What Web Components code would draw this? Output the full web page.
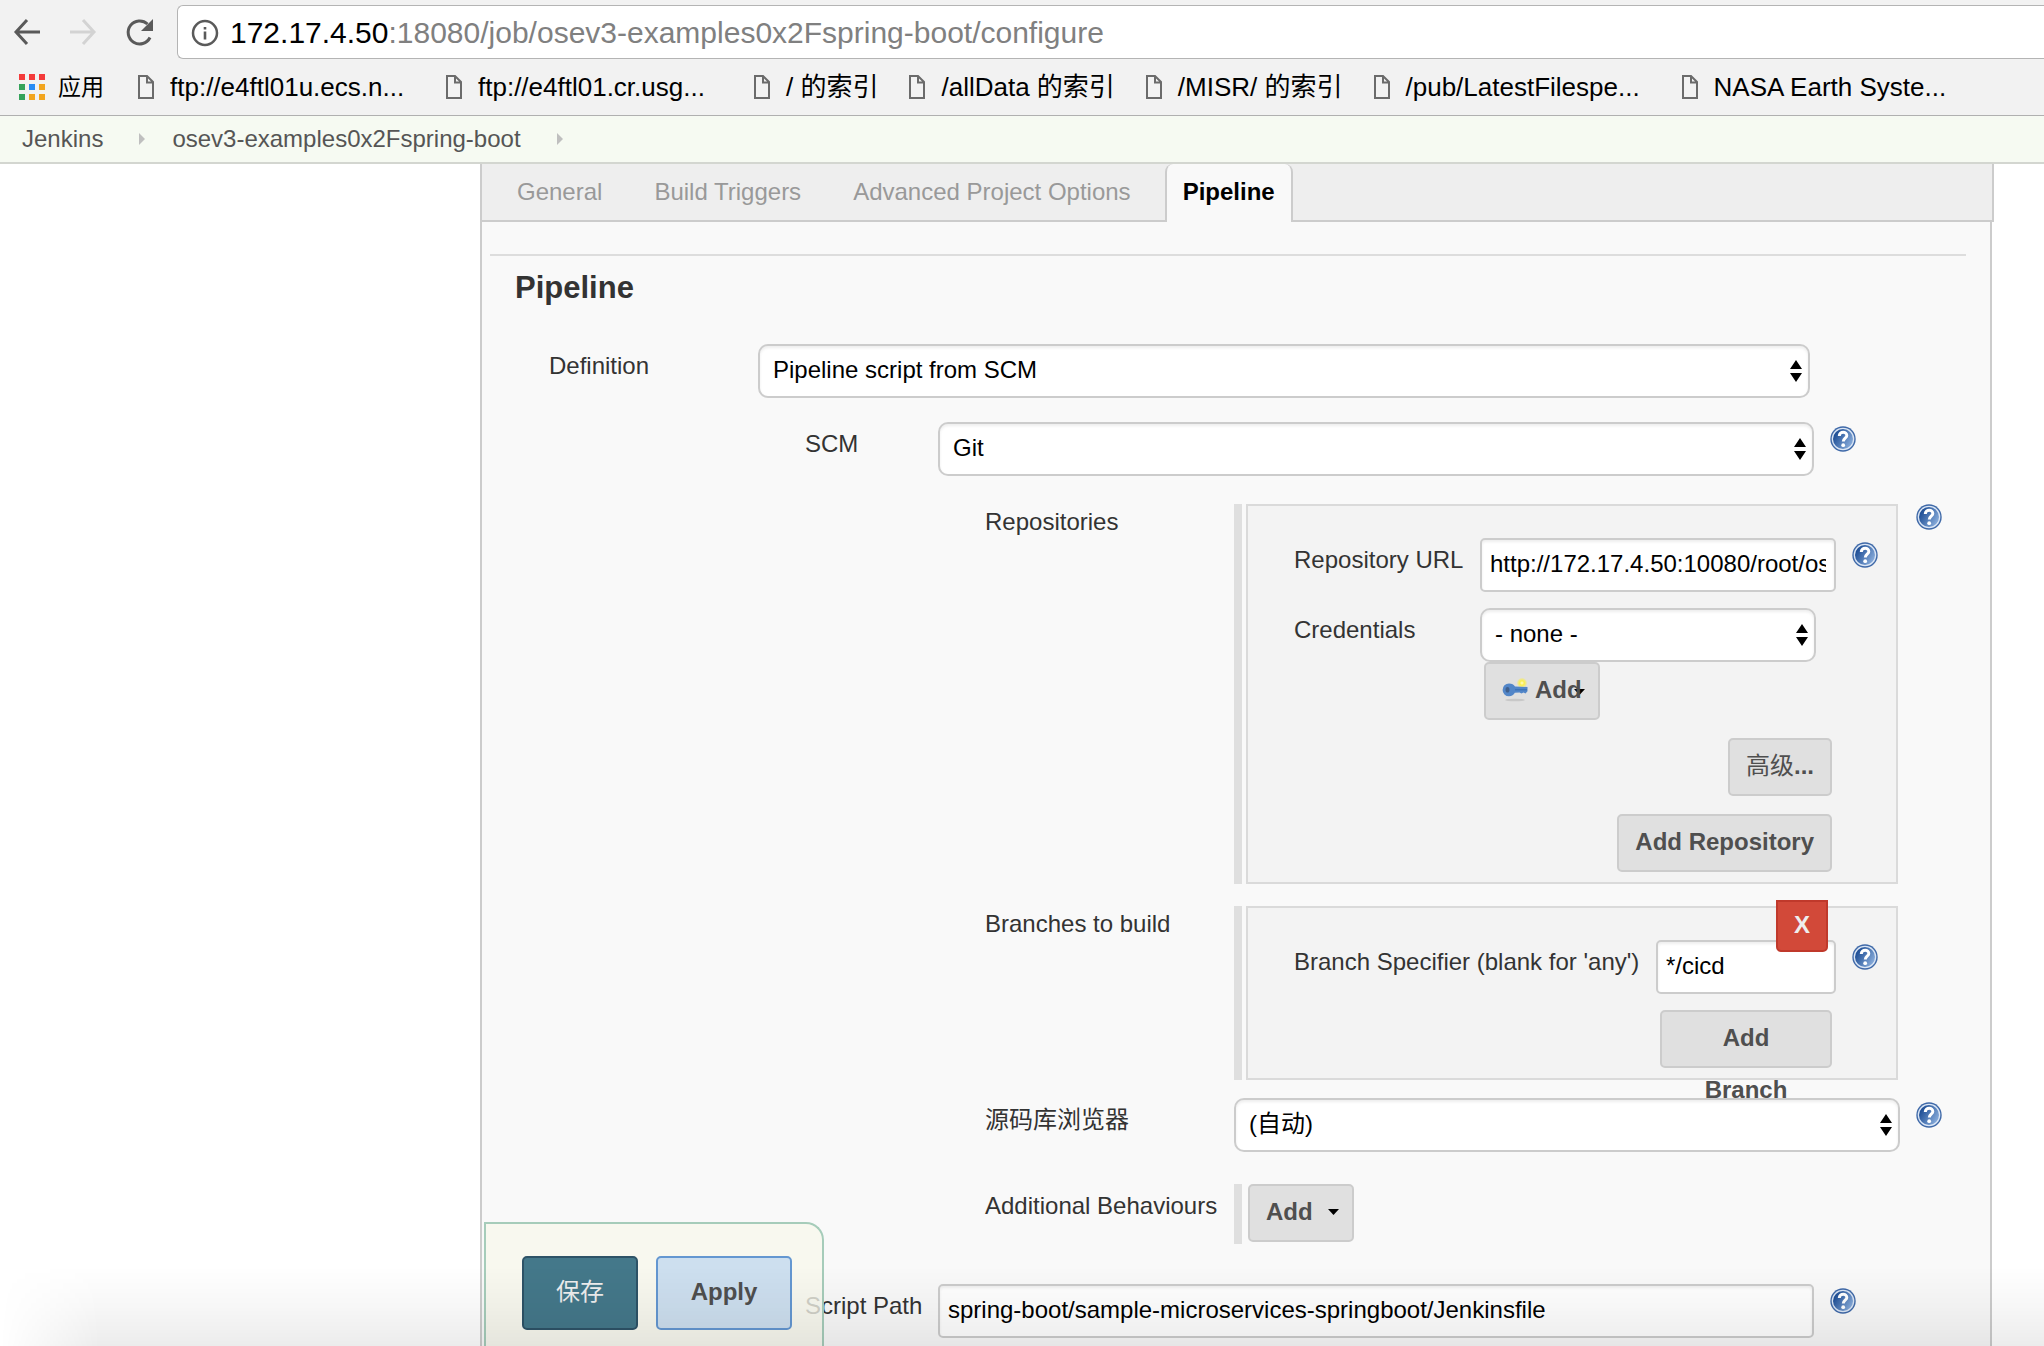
<!DOCTYPE html>
<html lang="zh-CN">
<head>
<meta charset="utf-8">
<title>osev3-examples0x2Fspring-boot Config [Jenkins]</title>
<style>
  html, body { margin: 0; }
  body {
    min-height: 100vh; display: flex; flex-direction: column; overflow: hidden;
    background: #fff; color: #333;
    font: 24px/28px "Liberation Sans", "Noto Sans CJK SC", sans-serif;
  }
  .light { font-weight: 400; }
</style>
</head>
<body>
<browser-toolbar host="172.17.4.50" path=":18080/job/osev3-examples0x2Fspring-boot/configure"></browser-toolbar>
<bookmarks-bar>
  <bookmark-link clipped>ftp://e4ftl01u.ecs.n...</bookmark-link>
  <bookmark-link clipped>ftp://e4ftl01.cr.usg...</bookmark-link>
  <bookmark-link>/ 的索引</bookmark-link>
  <bookmark-link>/allData 的索引</bookmark-link>
  <bookmark-link>/MISR/ 的索引</bookmark-link>
  <bookmark-link clipped>/pub/LatestFilespe...</bookmark-link>
  <bookmark-link clipped>NASA Earth Syste...</bookmark-link>
</bookmarks-bar>
<bread-crumbs items="Jenkins|osev3-examples0x2Fspring-boot"></bread-crumbs>
<config-panel>
  <config-tabs slot="tabs" items="General|Build Triggers|Advanced Project Options|Pipeline" active="Pipeline"></config-tabs>
  <config-section heading="Pipeline">
    <form-field level="1" type="select" label="Definition" value="Pipeline script from SCM"></form-field>
    <form-field level="2" type="select" label="SCM" value="Git" help></form-field>
    <form-field level="3" type="group" label="Repositories" help>
      <repeat-box>
        <form-field level="box" type="text" label="Repository URL" value="http://172.17.4.50:10080/root/osev3-examples.git" help></form-field>
        <form-field level="box" type="select" narrow label="Credentials" value="- none -"></form-field>
        <credential-add></credential-add>
        <push-button class="end"><span class="light">高级</span>...</push-button>
        <push-button class="end">Add Repository</push-button>
      </repeat-box>
    </form-field>
    <form-field level="3" type="group" label="Branches to build">
      <repeat-box removable>
        <form-field level="box" wide-label type="text" label="Branch Specifier (blank for 'any')" value="*/cicd" help></form-field>
        <push-button class="end" narrow>Add<br>Branch</push-button>
      </repeat-box>
    </form-field>
    <form-field level="3" type="select" over label="源码库浏览器" value="(自动)" help></form-field>
    <form-field level="3" type="group" plain label="Additional Behaviours">
      <repeat-box bare><push-button caret>Add</push-button></repeat-box>
    </form-field>
    <form-field level="2" last type="text" label="Script Path" value="spring-boot/sample-microservices-springboot/Jenkinsfile" help></form-field>
  </config-section>
</config-panel>
<save-bar></save-bar>

<script>
const component = (name, render) => customElements.define(name, class extends HTMLElement {
  connectedCallback() {
    if (this.shadowRoot) return;
    this.attachShadow({ mode: 'open' }).innerHTML =
      '<style>*,:host{box-sizing:border-box}:host{display:block}a{color:inherit;text-decoration:none}button{font:inherit;cursor:pointer}</style>' + render(this);
  }
});
const attr = (el, n) => (el.getAttribute(n) || '').replace(/&/g, '&amp;').replace(/"/g, '&quot;').replace(/</g, '&lt;');

component('browser-toolbar', el => `
<style>
  :host { background: #f2f2f2; padding-top: 5px; }
  nav { display: flex; align-items: center; height: 54px; padding-left: 13px; }
  button { flex: none; border: 0; padding: 0; background: none; width: 56px; height: 40px; }
  button svg { display: block; }
  .address { flex: 1; align-self: stretch; display: flex; align-items: center; gap: 11px; margin-left: -4px; padding: 2px 0 0 13px;
    background: #fff; border: 1px solid #b4b4b4; border-right: 0; border-radius: 6px 0 0 6px; font-size: 30px; line-height: 34px; color: #808080; white-space: nowrap; }
  b { font-weight: 400; color: #000; }
</style>
<nav>
  <button aria-label="Back"><svg width="28" height="40" viewBox="0 0 28 40" fill="none" stroke="#5a5a5a" stroke-width="3"><path d="M27 20H4M14 8 3 20l11 12"/></svg></button>
  <button aria-label="Forward"><svg width="28" height="40" viewBox="0 0 28 40" fill="none" stroke="#d3d3d3" stroke-width="3"><path d="M1 20h23M14 8l11 12-11 12"/></svg></button>
  <button aria-label="Reload"><svg width="28" height="40" viewBox="0 0 28 40"><path d="M25 25.500A11.500 11.500 0 1 1 22.500 12" fill="none" stroke="#5a5a5a" stroke-width="3"/><path d="M28 7v12H16z" fill="#5a5a5a"/></svg></button>
  <div class="address">
    <svg width="28" height="28" viewBox="0 0 28 28"><circle cx="14" cy="14" r="12" fill="none" stroke="#5a5a5a" stroke-width="2.500"/><path d="M12.700 12.500h2.600v8h-2.600zM12.700 8h2.600v2.600h-2.600z" fill="#5a5a5a"/></svg>
    <span><b>${attr(el, 'host')}</b>${attr(el, 'path')}</span>
  </div>
</nav>`);

component('bookmarks-bar', () => `
<style>
  :host { background: #f2f2f2; border-bottom: 1px solid #b0b0b0; font-size: 26px; color: #000; }
  nav { display: flex; align-items: center; height: 56px; padding: 0 19px; }
  .apps { display: flex; align-items: center; gap: 13px; font-size: 23px; margin-right: 34px; }
  .list { display: flex; gap: 31px; }
</style>
<nav>
  <a class="apps" href="#apps"><svg width="26" height="26" viewBox="0 0 26 26">
    <path fill="#f43b3b" d="M0 0h6v6H0zM10 0h6v6h-6zM20 0h6v6h-6z"/>
    <path fill="#35a35b" d="M0 10h6v6H0zM0 20h6v6H0z"/><path fill="#2a8cf4" d="M10 10h6v6h-6z"/>
    <path fill="#f2a51f" d="M20 10h6v6h-6zM10 20h6v6h-6zM20 20h6v6h-6z"/></svg>应用</a>
  <div class="list"><slot></slot></div>
</nav>`);

component('bookmark-link', () => `
<style>
  a { display: flex; align-items: center; gap: 16px; white-space: nowrap; }
  :host([clipped]) { width: 277px; }
  svg { flex: none; }
</style>
<a href="#"><svg width="16" height="24" viewBox="0 0 16 24" fill="none" stroke="#6b6b6b" stroke-width="2"><path d="M1 1h8l6 6v16H1zM9 1v6.500h6"/></svg><span><slot></slot></span></a>`);

component('bread-crumbs', el => `
<style>
  :host { background: #f6faf2; border-bottom: 2px solid #d3d6d0; }
  ol { display: flex; align-items: center; list-style: none; margin: 0; padding: 0 22px; height: 46px; color: #555; }
  li { display: flex; align-items: center; }
  svg { margin: 0 27px 0 36px; }
</style>
<ol>${attr(el, 'items').split('|').map(t => `<li><a href="#">${t}</a><svg width="6" height="12" viewBox="0 0 6 12"><path d="M0 0l6 6-6 6z" fill="#bfbfbf"/></svg></li>`).join('')}</ol>`);

component('config-panel', () => `
<style>
  :host { flex: 1; display: flex; flex-direction: column; margin: 0 50px 0 480px; }
  .body { flex: 1; margin-right: 2px; padding: 32px 24px 8px 8px; background: #f9f9f9; border: solid #ccc; border-width: 0 2px; }
</style>
<slot name="tabs"></slot><div class="body"><slot></slot></div>`);

component('config-tabs', el => `
<style>
  nav { display: flex; height: 58px; padding-left: 1px; background: #eee; border: solid #ccc; border-width: 0 2px 2px; color: #999; }
  a { height: 58px; line-height: 56px; margin-left: 16px; padding: 0 16px; border: solid transparent; border-width: 0 2px; white-space: nowrap; }
  a.on { background: #f9f9f9; border-color: #ccc; border-radius: 8px 8px 0 0; color: #000; font-weight: 700; }
</style>
<nav>${attr(el, 'items').split('|').map(t => `<a href="#"${t === attr(el, 'active') ? ' class="on"' : ''}>${t}</a>`).join('')}</nav>`);

component('config-section', el => `
<style>
  :host { border-top: 2px solid #ddd; }
  h2 { margin: 14px 0 38px; padding-left: 25px; font-size: 31px; line-height: 36px; color: #333; }
</style>
<h2>${attr(el, 'heading')}</h2><slot></slot>`);

component('form-field', el => {
  const type = attr(el, 'type'), value = attr(el, 'value'), label = attr(el, 'label');
  const control = type === 'select'
    ? `<div class="pick"><select id="c"><option>${value}</option></select><svg width="12" height="22" viewBox="0 0 12 22"><path d="M6 0l6 9H0zM0 13h12l-6 9z"/></svg></div>`
    : type === 'text' ? `<input id="c" type="text" value="${value}">` : `<slot></slot>`;
  return `
<style>
  :host { display: flex; align-items: flex-start; --top: 8px; --gap: 16px; }
  :host([level="1"]) { --label: 209px; padding: 0 156px 0 59px; }
  :host([level="2"]) { --label: 133px; padding: 0 110px 0 315px; margin-top: 24px; }
  :host([level="3"]) { --label: 249px; padding: 0 24px 0 495px; margin-top: 18px; }
  :host([level="3"][type="group"]) { --top: 4px; --gap: 18px; margin-top: 22px; padding-right: 68px; }
  :host([level="3"][help][type="group"]) { margin-top: 28px; padding-right: 24px; }
  :host([level="3"][type="group"][plain]) { --top: 8px; margin-top: 32px; }
  :host([level="2"][last]) { margin-top: 40px; }
  :host([level="box"]) { --label: 186px; padding-right: 18px; margin-bottom: 16px; }
  :host([level="box"][narrow]) { padding-right: 80px; margin-bottom: 0; }
  :host([level="box"][wide-label]) { --label: 362px; }
  :host([over]) { position: relative; z-index: 1; }
  .label { flex: none; width: var(--label); padding-top: var(--top); white-space: nowrap; }
  .control { flex: 1; min-width: 0; }
  .pick { display: grid; }
  .pick > * { grid-area: 1 / 1; }
  .pick svg { place-self: center end; margin-right: 8px; pointer-events: none; }
  select, input { appearance: none; display: block; width: 100%; height: 54px; margin: 0; border: 2px solid #ccc; background: #fff; color: #000;
    font: inherit; box-shadow: inset 0 2px 3px rgba(0,0,0,.07); }
  select { border-radius: 10px; padding: 0 30px 2px 13px; }
  input { border-radius: 5px; padding: 0 8px 2px; }
  .help { flex: none; width: 26px; height: 26px; margin: 4px 0 0 var(--gap); padding: 0; border: 0; background: none; }
  :host([level="3"][type="group"]) .help { margin-top: 0; }
  .help svg { display: block; }
</style>
${type === 'group' ? `<span class="label">${label}</span>` : `<label class="label" for="c">${label}</label>`}
<div class="control">${control}</div>
${el.hasAttribute('help') ? `<button class="help" aria-label="Help"><svg width="26" height="26" viewBox="0 0 26 26">
  <defs><linearGradient id="g" x1="0" y1=".2" x2="1" y2=".8"><stop offset=".1" stop-color="#1f4f96"/><stop offset="1" stop-color="#8fb2df"/></linearGradient></defs>
  <circle cx="13" cy="13" r="12.700" fill="#3f69a8"/><circle cx="13" cy="13" r="11.300" fill="#dbe6f5"/><circle cx="13" cy="13" r="10" fill="url(#g)"/>
  <path d="M9.300 10c0-5 7.800-4.700 7.500-.4-.1 2.600-3.500 2.700-3.500 5.900" fill="none" stroke="#fff" stroke-width="3"/><circle cx="13.200" cy="19.200" r="1.900" fill="#fff"/></svg></button>` : ''}`;
});

component('repeat-box', el => {
  const bare = el.hasAttribute('bare');
  return `
<style>
  :host { display: flex; border-left: 8px solid #dfdfdf; padding-left: 4px; }
  .box { position: relative; flex: 1; min-width: 0; display: flex; flex-direction: column; padding: 32px 0 10px 46px; background: #f3f3f3; border: 2px solid #dadada; }
  .bare { padding: 0 0 2px 2px; }
  .remove { position: absolute; top: -8px; right: 68px; width: 52px; height: 52px; padding: 0 0 2px; border: 2px solid #c0392b; border-radius: 0 0 5px 5px; background: #d24939; color: #eee; font-weight: 700; }
  ::slotted(.end) { align-self: flex-end; margin-right: 64px; margin-top: 18px; }
  :host([removable]) ::slotted(.end) { margin-top: 0; }
</style>
<div class="${bare ? 'bare' : 'box'}"><slot></slot>${el.hasAttribute('removable') ? '<button class="remove">X</button>' : ''}</div>`;
});

const buttonCss = `
  button { position: relative; display: block; height: 58px; padding: 0 16px 2px; border: 2px solid #ccc; border-radius: 5px; background: #e0e0e0; color: #4f4f4f; font-weight: 700; line-height: 52px; white-space: nowrap; }`;

component('push-button', el => `
<style>${buttonCss}
  :host([narrow]) button { width: 172px; }
  :host([caret]) button { display: flex; align-items: center; gap: 15px; padding-right: 13px; }
</style>
<button><slot></slot>${el.hasAttribute('caret') ? '<svg width="11" height="6" viewBox="0 0 11 6"><path d="M0 0h11L5.500 6z"/></svg>' : ''}</button>`);

component('credential-add', () => `
<style>${buttonCss}
  :host { display: flex; padding-left: 190px; }
  button { display: flex; align-items: center; gap: 7px; width: 116px; isolation: isolate; }
  .caret { position: absolute; right: 13px; top: 25px; z-index: -1; }
</style>
<button><svg width="26" height="24" viewBox="0 0 26 24">
  <defs><radialGradient id="s"><stop offset="0" stop-color="#fffbd0"/><stop offset=".45" stop-color="#fbee4a"/><stop offset="1" stop-color="#fbee4a" stop-opacity=".2"/></radialGradient></defs>
  <ellipse cx="13" cy="22" rx="10" ry="1.300" fill="#c8c8c8"/>
  <circle cx="20" cy="5" r="5" fill="url(#s)"/>
  <path d="M7 5.500c3 0 4.800 1.200 6 3L25.500 9v4.300l-2 2.200-2-1-2 1-2-1-4.700.3C11.500 17 10 18.300 7 18.300a6.400 6.400 0 0 1 0-12.800z" fill="#5286c8"/>
  <path d="M13 11.800h12" stroke="#3a6fb3" stroke-width="1.200"/><ellipse cx="5.500" cy="11.800" rx="2" ry="2.800" fill="#3f5f8c"/></svg>Add<svg class="caret" width="11" height="6" viewBox="0 0 11 6"><path d="M0 0h11L5.500 6z"/></svg></button>`);

component('save-bar', () => `
<style>
  :host { position: fixed; z-index: 2; left: 0; right: 0; bottom: 0; height: 124px; padding-left: 484px; pointer-events: none; }
  .bar { width: 340px; height: 124px; display: flex; gap: 18px; padding: 32px 30px 0 36px; background: rgba(247,248,236,.8); border: 2px solid #a6ccba; border-bottom: 0; border-radius: 0 18px 0 0; }
  .shade { position: absolute; inset: auto 0 0 0; height: 80px; background: linear-gradient(rgba(0,0,0,0), rgba(0,0,0,.03) 50%, rgba(0,0,0,.075)); -webkit-mask: linear-gradient(90deg, transparent, #000 100px); mask: linear-gradient(90deg, transparent, #000 100px); }
  button { height: 74px; padding: 0 0 2px; border: 2px solid; border-radius: 5px; font-weight: 700; pointer-events: auto; }
  .save { width: 116px; background: #44788a; border-color: #2e5367; color: #eee; font-weight: 400; }
  .apply { width: 136px; background: #cddfef; border-color: #6497d1; color: #4f4f4f; }
</style>
<div class="bar"><button class="save">保存</button><button class="apply">Apply</button></div><div class="shade"></div>`);
</script>
</body>
</html>
